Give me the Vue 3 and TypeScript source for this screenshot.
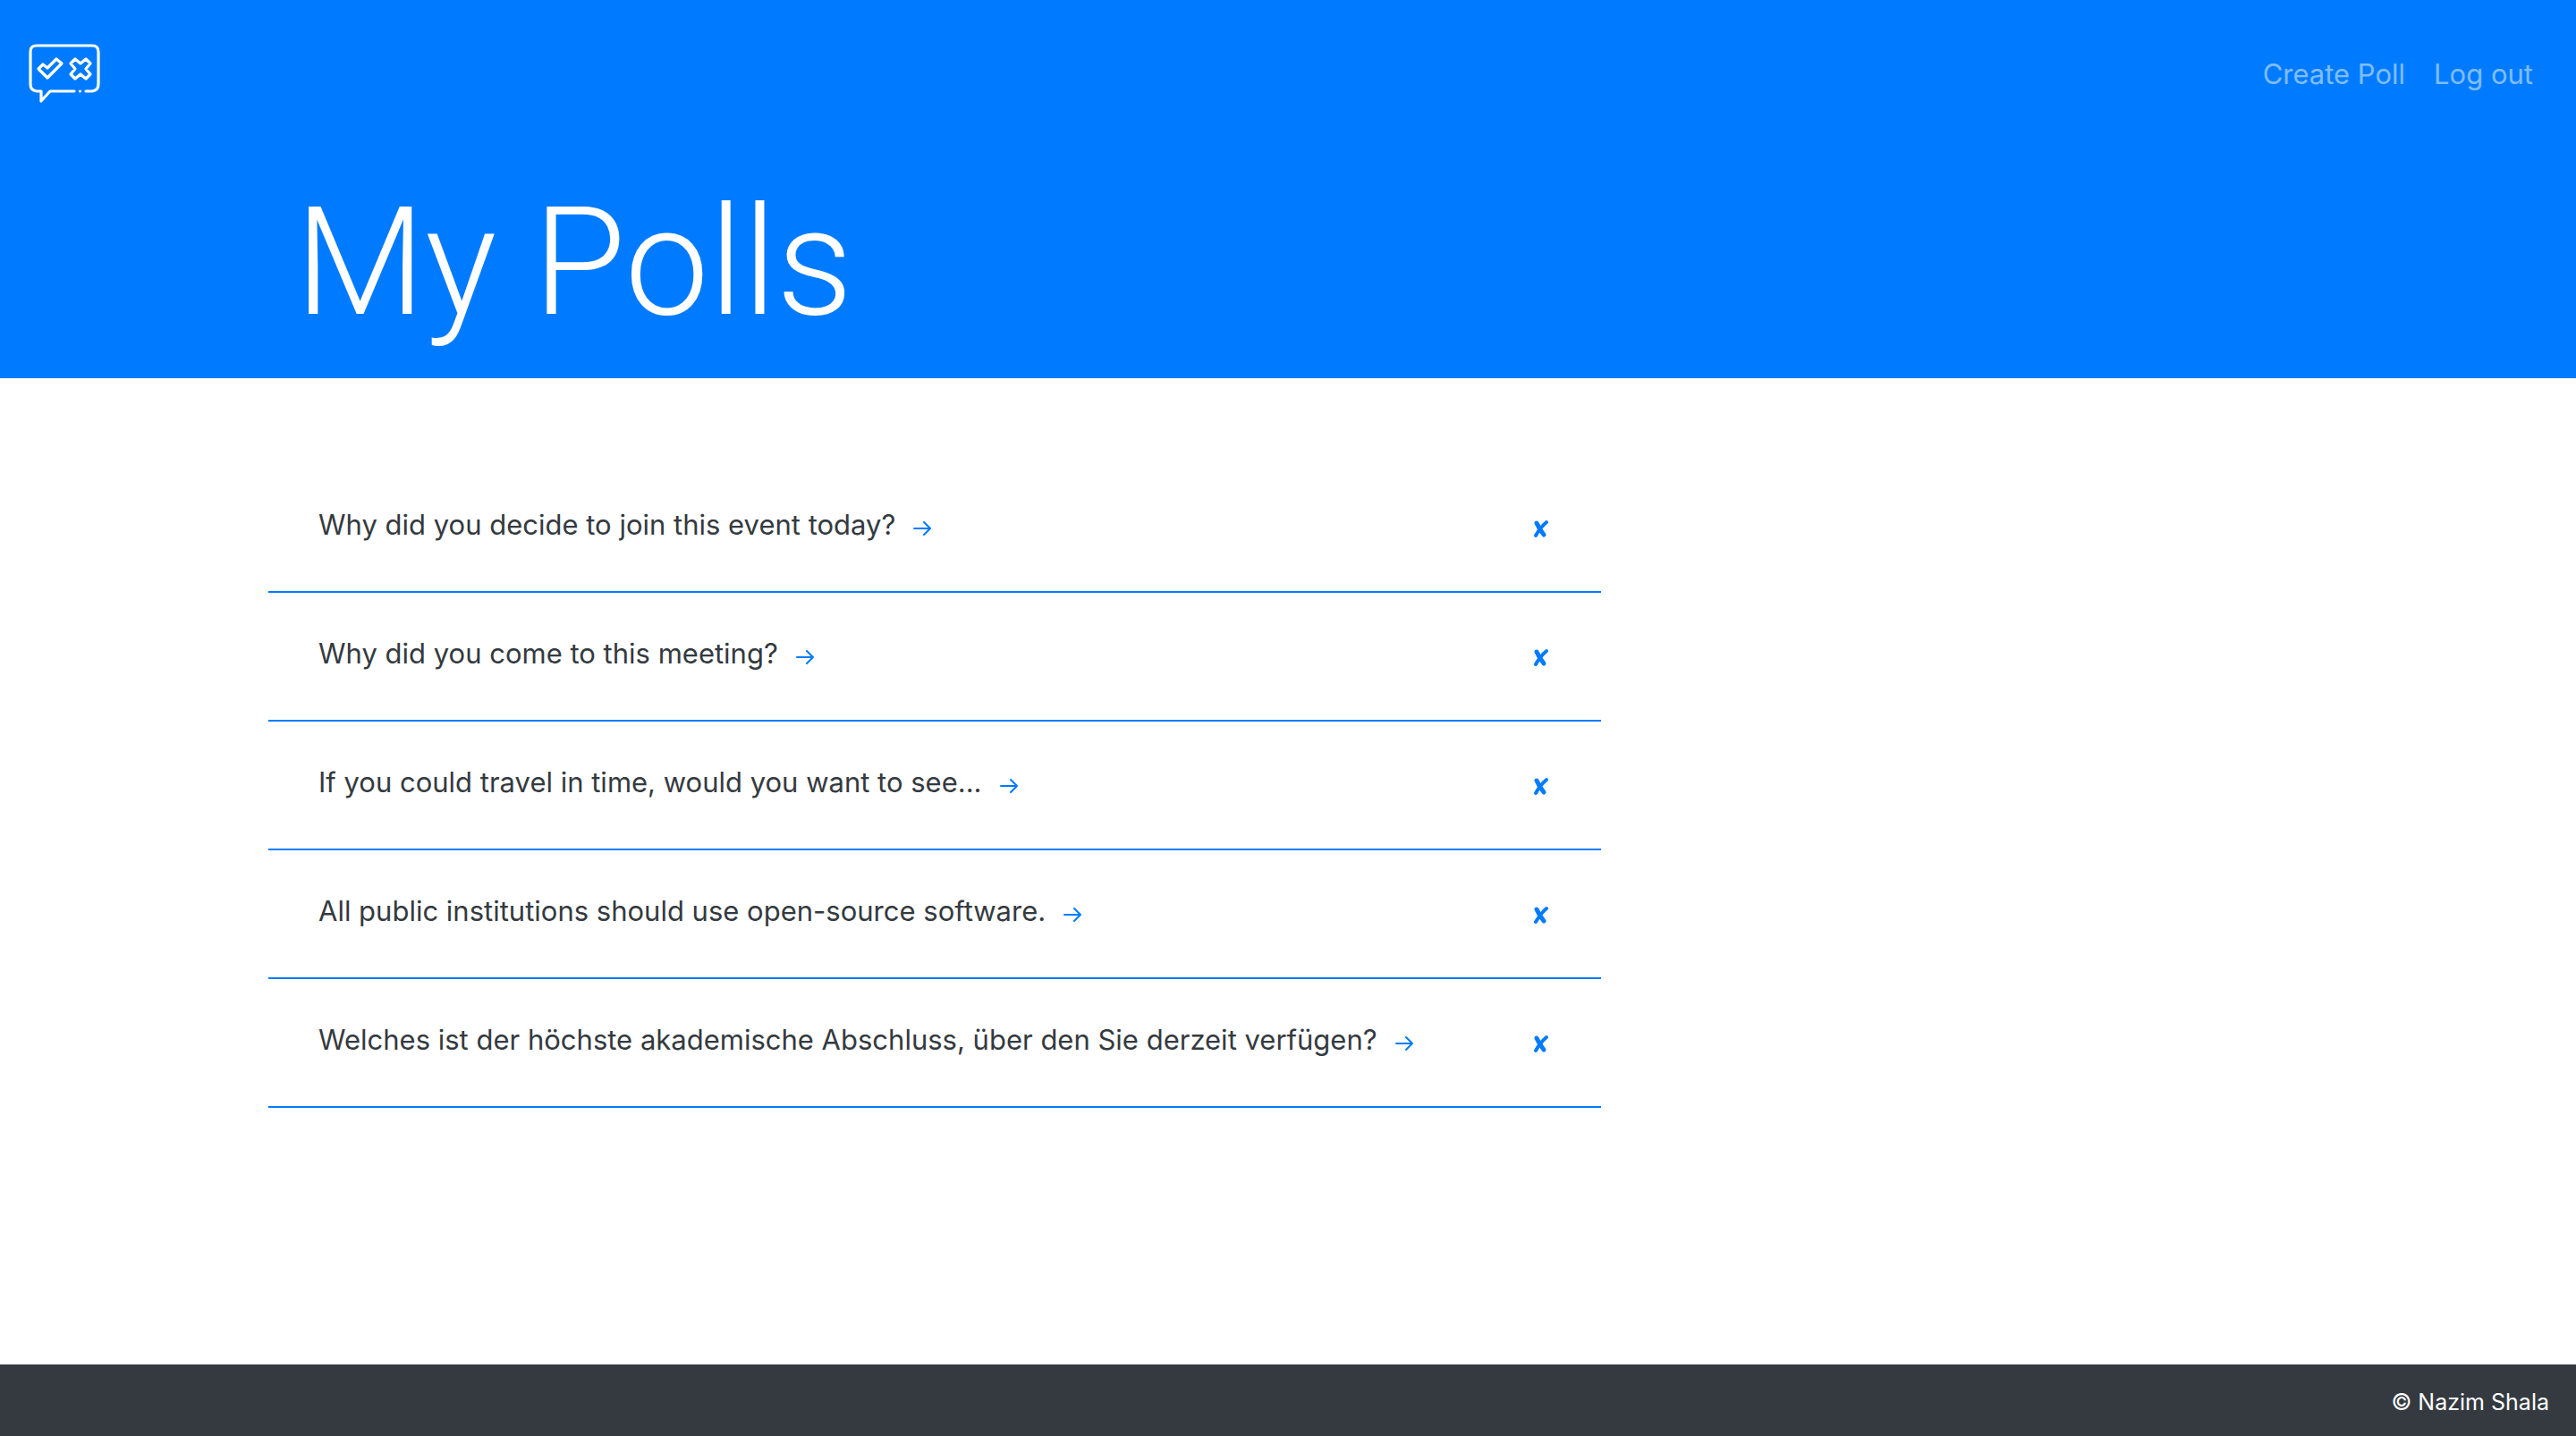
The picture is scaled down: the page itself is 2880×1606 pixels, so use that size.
<script setup lang="ts">
interface Poll {
  id: number
  question: string
}

const polls: Poll[] = [
  { id: 1, question: 'Why did you decide to join this event today?' },
  { id: 2, question: 'Why did you come to this meeting?' },
  { id: 3, question: 'If you could travel in time, would you want to see...' },
  { id: 4, question: 'All public institutions should use open-source software.' },
  { id: 5, question: 'Welches ist der höchste akademische Abschluss, über den Sie derzeit verfügen?' },
]
</script>

<template>
  <div class="page">
    <header class="header">
      <nav class="nav">
        <a class="brand" href="#" aria-label="Home">
          <svg class="logo" viewBox="0 0 80 68" fill="none" stroke="#fff" stroke-width="3.200" stroke-linecap="round" stroke-linejoin="round">
            <path d="M51 53H24L14 64V53H9Q2 52 2 45V9Q2 2 9 2H71Q78 2 78 9V45Q78 52 71 53H64" />
            <path d="M57.500 53h.01" />
            <path d="M11 28l5-5 5 4 10-10 6 5-16 16z" />
            <path d="M52 17l6 5 6-5 5 5-5 6 5 6-5 5-6-5-6 5-5-5 5-6-5-6z" />
          </svg>
        </a>
        <div class="links">
          <a href="#">Create Poll</a>
          <a href="#">Log out</a>
        </div>
      </nav>
      <div class="container title">
        <h1>My Polls</h1>
      </div>
    </header>

    <main class="container">
      <ul class="polls">
        <li v-for="poll in polls" :key="poll.id" class="poll">
          <span class="question">{{ poll.question }}</span>
          <a class="open" href="#" aria-label="Open poll">
            <svg viewBox="0 0 20 18" fill="none" stroke="currentColor" stroke-width="2" stroke-linecap="round" stroke-linejoin="round">
              <path d="M1 9H19M12 2L19 9L12 16" />
            </svg>
          </a>
          <button class="remove" type="button" aria-label="Delete poll">
            <svg viewBox="0 0 20 22" fill="none" stroke="currentColor" stroke-width="5" stroke-linecap="round">
              <path d="M4 5Q7 12 12 18" />
              <path stroke-width="4" d="M15 4Q8 10 3 19" />
            </svg>
          </button>
        </li>
      </ul>
    </main>

    <footer class="footer">© Nazim Shala</footer>
  </div>
</template>

<style>
body {
  margin: 0;
}
</style>

<style scoped>
.page {
  display: flex;
  flex-direction: column;
  min-height: 100vh;
  background: #fff;
  color: #343a40;
  font-family: Inter, "Liberation Sans", sans-serif;
  font-size: 31px;
  line-height: 48px;
}

.header {
  background: #007bff;
  color: #fff;
}

.nav {
  display: flex;
  align-items: center;
  justify-content: space-between;
  padding: 49px 48px 0 32px;
}

.brand,
.logo {
  display: block;
}

.logo {
  width: 80px;
  height: 68px;
}

.links {
  display: flex;
  gap: 32px;
}

.links a {
  color: rgba(255, 255, 255, 0.5);
  text-decoration: none;
}

.container {
  box-sizing: border-box;
  width: 100%;
  max-width: 2280px;
  margin: 0 auto;
}

.title {
  padding: 72px 30px 24px;
}

h1 {
  margin: 0;
  font-family: Roboto, Inter, sans-serif;
  font-size: 168px;
  font-weight: 350;
  line-height: 210px;
}

.polls {
  width: calc(66.667% - 30px);
  margin: 0;
  padding: 96px 0;
  list-style: none;
}

.poll {
  display: flex;
  align-items: center;
  box-sizing: border-box;
  min-height: 144px;
  padding: 0 56px 6px;
  border-bottom: 2px solid #007bff;
}

.open {
  margin-left: 20px;
  padding-top: 8px;
  color: #007bff;
}

.open svg {
  display: block;
  width: 20px;
  height: 18px;
}

.remove {
  margin-left: auto;
  padding: 8px 0 0;
  border: 0;
  background: none;
  color: #007bff;
  cursor: pointer;
}

.remove svg {
  display: block;
  width: 20px;
  height: 22px;
}

.footer {
  margin-top: auto;
  padding: 18px 30px 14px;
  background: #343a40;
  color: #fff;
  font-size: 25px;
  text-align: right;
}
</style>
